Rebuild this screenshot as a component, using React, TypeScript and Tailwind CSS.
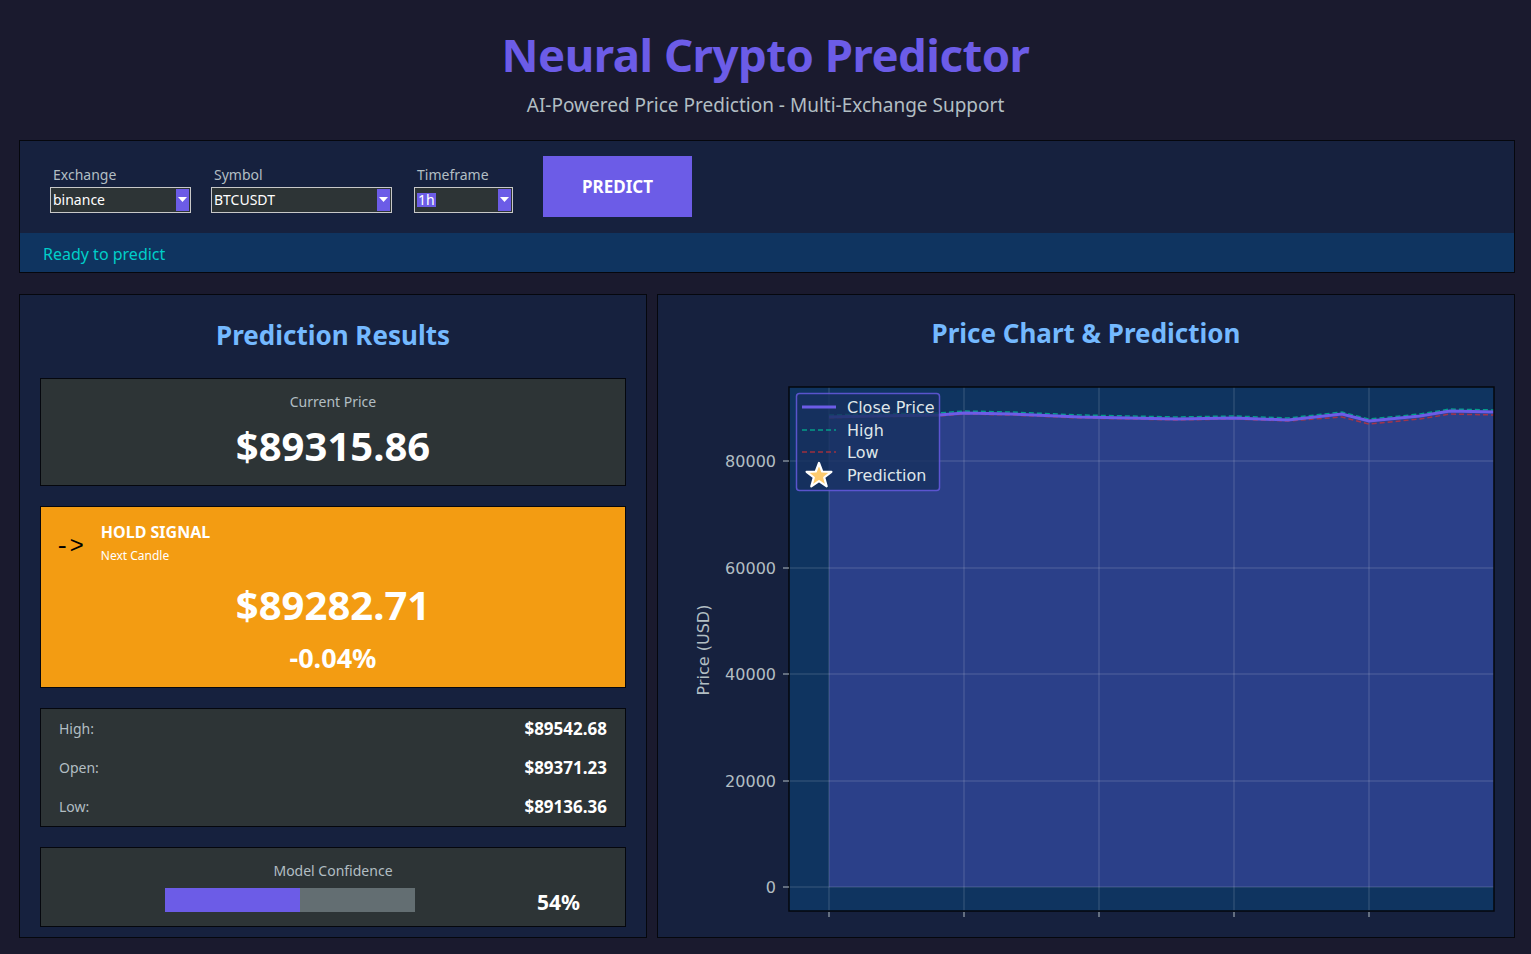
import React from 'react';

const UI_FONT = "font-['Noto_Sans','Open_Sans',sans-serif]";

const Combo: React.FC<{ value: string; width: string; selected?: boolean }> = ({ value, width, selected }) => (
  <div className={`flex h-[26px] ${width} border border-[#c8c8c8] bg-[#2d3436]`}>
    <div className="flex-1 flex items-center px-[2px] text-[14px] text-white leading-none">
      {selected ? <span className="bg-[#6c5ce7] px-[1px]">{value}</span> : value}
    </div>
    <div className="w-[13px] my-[1px] mr-[1px] bg-[#6c5ce7] flex items-center justify-center">
      <svg width="9" height="6" viewBox="0 0 9 6"><path d="M0 0 L9 0 L4.5 5 Z" fill="#fff" /></svg>
    </div>
  </div>
);

const Field: React.FC<{ label: string; children: React.ReactNode }> = ({ label, children }) => (
  <div className="flex flex-col">
    <span className="text-[14px] text-[#b2bec3] leading-[18px] mb-[3px] pl-[3px]">{label}</span>
    {children}
  </div>
);

const PriceChart: React.FC = () => {
  // screen coords -> svg coords (svg origin at 658, 370)
  const close: [number, number][] = [
    [829, 417], [870, 416], [939, 415], [964, 413], [1010, 414], [1080, 417], [1177, 419], [1234, 418],
    [1288, 420], [1342, 414], [1369, 421], [1420, 416], [1450, 411], [1494, 412],
  ].map(([x, y]) => [x - 658, y - 370]);
  const high = close.map(([x, y]) => [x, y - 2]);
  const low = close.map(([x, y], i) => [x, y + (i > 8 ? 3 : 1)]);
  const pts = (a: number[][]) => a.map((p) => p.join(',')).join(' ');
  const area = `${close[0][0]},517 ${pts(close)} ${close[close.length - 1][0]},517`;
  const yTicks = [
    { v: '80000', y: 91 },
    { v: '60000', y: 198 },
    { v: '40000', y: 304 },
    { v: '20000', y: 411 },
    { v: '0', y: 517 },
  ];
  const xTicks = [171, 306, 441, 576, 711];
  return (
    <svg width="856" height="566" viewBox="0 0 856 566" className="block">
      <rect x="131" y="17" width="705" height="524" fill="#0f3460" />
      <polygon points={area} fill="#6c5ce7" fillOpacity="0.3" />
      {yTicks.map((t) => (
        <line key={t.v} x1="131" x2="836" y1={t.y} y2={t.y} stroke="#ffffff" strokeOpacity="0.18" strokeWidth="1" />
      ))}
      {xTicks.map((x) => (
        <line key={x} x1={x} x2={x} y1="17" y2="541" stroke="#ffffff" strokeOpacity="0.18" strokeWidth="1" />
      ))}
      <polyline points={pts(high)} fill="none" stroke="#00b894" strokeWidth="1.5" strokeDasharray="5 3" strokeOpacity="0.8" />
      <polyline points={pts(low)} fill="none" stroke="#d63031" strokeWidth="1.5" strokeDasharray="5 3" strokeOpacity="0.7" />
      <polyline points={pts(close)} fill="none" stroke="#6c5ce7" strokeWidth="3" />
      <rect x="131" y="17" width="705" height="524" fill="none" stroke="#05070d" strokeWidth="1.5" />
      {yTicks.map((t) => (
        <g key={t.v}>
          <line x1="125" x2="131" y1={t.y} y2={t.y} stroke="#b2bec3" strokeWidth="1" />
          <text x="118" y={t.y + 6} textAnchor="end" fontSize="16" fill="#b2bec3" fontFamily="DejaVu Sans, sans-serif">
            {t.v}
          </text>
        </g>
      ))}
      {xTicks.map((x) => (
        <line key={x} x1={x} x2={x} y1="542" y2="547" stroke="#b2bec3" strokeWidth="1" />
      ))}
      <text
        x="46"
        y="280"
        transform="rotate(-90 46 280)"
        textAnchor="middle"
        dominantBaseline="middle"
        fontSize="16"
        fill="#b2bec3"
        fontFamily="DejaVu Sans, sans-serif"
      >
        Price (USD)
      </text>
      {/* legend */}
      <rect x="138.5" y="23.5" width="143" height="97" rx="3" fill="#16305e" fillOpacity="0.8" stroke="#6c5ce7" strokeOpacity="0.8" strokeWidth="1.5" />
      <g fontFamily="DejaVu Sans, sans-serif" fontSize="16" fill="#dfe6e9">
        <line x1="144" x2="178" y1="37" y2="37" stroke="#6c5ce7" strokeWidth="3" />
        <text x="189" y="43">Close Price</text>
        <line x1="144" x2="178" y1="60" y2="60" stroke="#00b894" strokeWidth="1.5" strokeDasharray="5 3" strokeOpacity="0.8" />
        <text x="189" y="66">High</text>
        <line x1="144" x2="178" y1="82" y2="82" stroke="#d63031" strokeWidth="1.5" strokeDasharray="5 3" strokeOpacity="0.7" />
        <text x="189" y="88">Low</text>
        <polygon
          points="161,93 164.2,101.5 173.4,101.8 166.2,107.5 168.7,116.3 161,111.2 153.3,116.3 155.8,107.5 148.6,101.8 157.8,101.5"
          fill="#fdcb6e"
          stroke="#ffffff"
          strokeWidth="2.2"
          strokeLinejoin="round"
        />
        <text x="189" y="111">Prediction</text>
      </g>
    </svg>
  );
};

export default function App() {
  return (
    <div className={`w-[1531px] h-[954px] bg-[#1a1a2e] overflow-hidden ${UI_FONT}`}>
      <header className="flex flex-col items-center pt-[27px]">
        <h1 className="text-[45.5px] font-bold leading-[54px] text-[#6c5ce7] tracking-[-0.5px]">Neural Crypto Predictor</h1>
        <p className="text-[19px] leading-[26px] text-[#b2bec3] mt-[11px]">AI-Powered Price Prediction - Multi-Exchange Support</p>
      </header>

      <section className="mt-[22px] ml-[19px] w-[1496px] border border-[#05070d] bg-[#16213e]">
        <div className="h-[92px] flex items-start pl-[30px] pt-[15px]">
          <div className="flex items-end gap-[20px] pt-[10px]">
            <Field label="Exchange">
              <Combo value="binance" width="w-[141px]" />
            </Field>
            <Field label="Symbol">
              <Combo value="BTCUSDT" width="w-[181px]" />
            </Field>
            <div className="ml-[2px]">
              <Field label="Timeframe">
                <Combo value="1h" width="w-[99px]" selected />
              </Field>
            </div>
          </div>
          <button className="ml-[30px] w-[149px] h-[61px] bg-[#6c5ce7] text-white font-bold text-[17px]">PREDICT</button>
        </div>
        <div className="h-[39px] bg-[#0f3460] flex items-center pl-[23px] pt-[2px]">
          <span className="text-[16px] text-[#00cec9]">Ready to predict</span>
        </div>
      </section>

      <main className="mt-[21px] ml-[19px] flex gap-[10px]">
        <div className="w-[628px] h-[644px] border border-[#05070d] bg-[#16213e] px-[20px] flex flex-col">
          <h2 className="h-[83px] shrink-0 flex items-center justify-center pb-[2px] text-[26px] font-bold text-[#74b9ff]">Prediction Results</h2>
          <div className="h-[108px] shrink-0 border border-[#05070d] bg-[#2d3436] flex flex-col items-center pt-[14px]">
            <span className="text-[14px] text-[#b2bec3] leading-[18px]">Current Price</span>
            <span className="text-[40px] font-bold text-white leading-[48px] mt-[11px]">$89315.86</span>
          </div>
          <div className="mt-[20px] h-[182px] shrink-0 border border-[#05070d] bg-[#f39c12] flex flex-col items-center">
            <div className="self-start flex items-start pl-[14px] pt-[14px]">
              <span className="text-[24px] text-black leading-none mt-[14px] font-['Liberation_Mono',monospace]">-&gt;</span>
              <div className="ml-[17px] flex flex-col">
                <span className="text-[16px] font-bold text-white leading-[22px]">HOLD SIGNAL</span>
                <span className="text-[12px] text-white leading-[16px] mt-[5px]">Next Candle</span>
              </div>
            </div>
            <span className="text-[40px] font-bold text-white leading-[48px] mt-[17px]">$89282.71</span>
            <span className="text-[27px] font-bold text-white leading-[32px] mt-[13px]">-0.04%</span>
          </div>
          <div className="mt-[20px] h-[119px] shrink-0 border border-[#05070d] bg-[#2d3436] px-[18px] flex flex-col">
            {[
              ['High:', '$89542.68'],
              ['Open:', '$89371.23'],
              ['Low:', '$89136.36'],
            ].map(([k, v]) => (
              <div key={k} className="h-[39px] shrink-0 flex items-center justify-between">
                <span className="text-[14px] text-[#b2bec3]">{k}</span>
                <span className="text-[17px] font-bold text-white">{v}</span>
              </div>
            ))}
          </div>
          <div className="mt-[20px] h-[80px] shrink-0 border border-[#05070d] bg-[#2d3436] flex flex-col items-center pt-[14px]">
            <span className="text-[14px] text-[#b2bec3] leading-[18px]">Model Confidence</span>
            <div className="w-full flex items-center mt-[6px]">
              <div className="ml-[124px] w-[250px] h-[24px] bg-[#636e72] flex">
                <div className="h-full bg-[#6c5ce7]" style={{ width: '54%' }} />
              </div>
              <span className="ml-[122px] text-[21px] font-bold text-white leading-[24px] mt-[4px]">54%</span>
            </div>
          </div>
        </div>

        <div className="w-[858px] h-[644px] border border-[#05070d] bg-[#16213e] flex flex-col">
          <h2 className="h-[75px] shrink-0 flex items-center justify-center pt-[2px] text-[26px] font-bold text-[#74b9ff]">Price Chart &amp; Prediction</h2>
          <PriceChart />
        </div>
      </main>
    </div>
  );
}
